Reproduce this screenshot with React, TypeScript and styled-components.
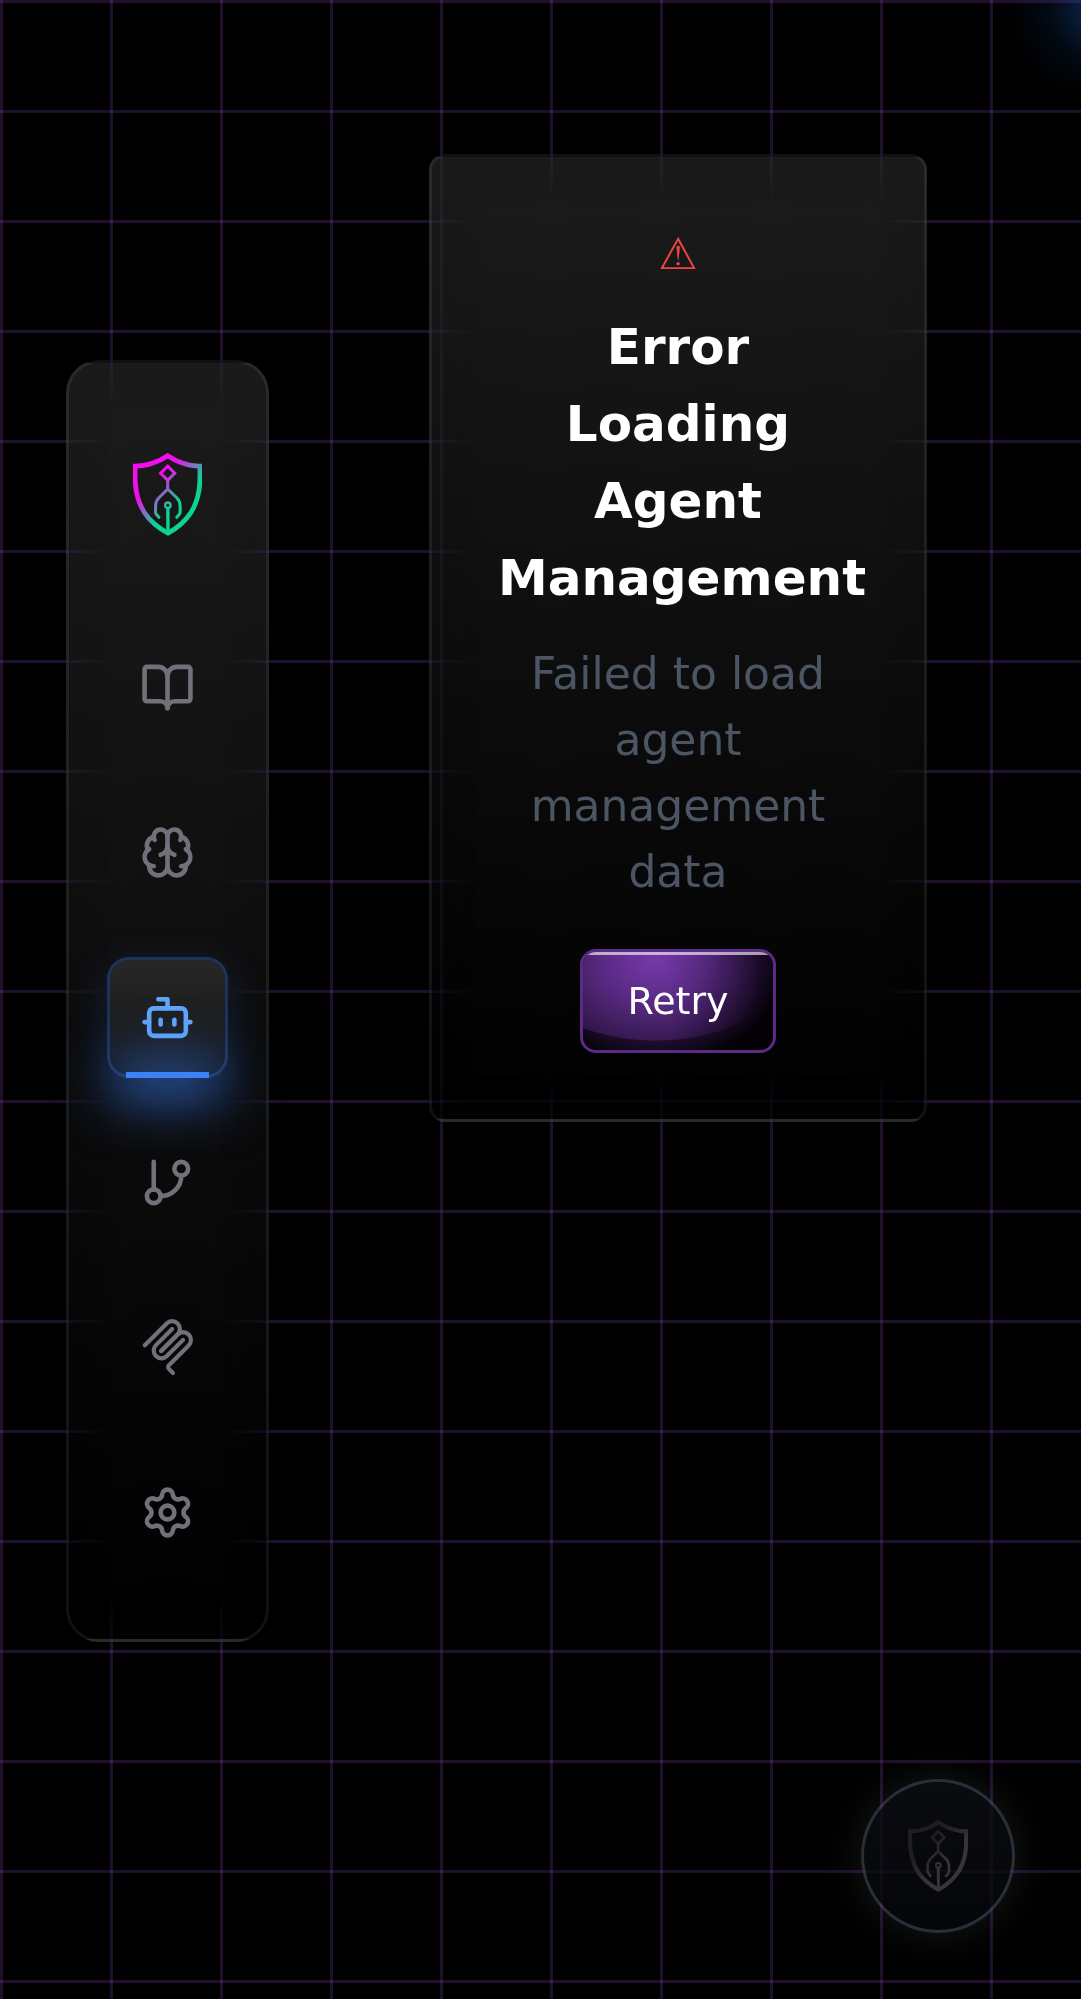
import React from "react";
import styled, { createGlobalStyle, css } from "styled-components";
import { BookOpen, Bot, Brain, GitBranch, Settings } from "lucide-react";

const GlobalStyle = createGlobalStyle`
  *, *::before, *::after { box-sizing: border-box; }
  body {
    margin: 0;
    background: #000;
    font-family: "DejaVu Sans", sans-serif;
  }
`;

const Shell = styled.div`
  display: flex;
  align-items: flex-start;
  gap: 160px;
  min-height: 100vh;
  padding: 0 154px 0 66px;
  background-color: #000;
  background-image:
    radial-gradient(circle 90px at calc(100% + 18px) 10px, rgba(30, 95, 190, 0.42), rgba(30, 95, 190, 0.1) 55%, transparent),
    linear-gradient(rgba(168, 85, 247, 0.19) 3px, transparent 3px),
    linear-gradient(90deg, rgba(168, 85, 247, 0.19) 3px, transparent 3px);
  background-size: 100% 100%, 110px 110px, 110px 110px;
`;

const glass = css`
  position: relative;
  border: 3px solid rgba(255, 255, 255, 0.065);
  background-image: linear-gradient(rgba(43, 43, 43, 0.62), rgba(0, 0, 0, 0.6));

  &::before {
    content: "";
    position: absolute;
    inset: 0;
    border-radius: inherit;
    backdrop-filter: blur(22px);
    mask-image:
      linear-gradient(90deg, transparent, #000 44px, #000 calc(100% - 44px), transparent),
      linear-gradient(transparent, #000 44px, #000 calc(100% - 44px), transparent);
    mask-composite: intersect;
  }

  > * { position: relative; }
`;

const Sidebar = styled.nav`
  ${glass}
  display: flex;
  flex-direction: column;
  align-items: center;
  gap: 44px;
  align-self: center;
  margin-top: 2px;
  padding: 66px 38px;
  border-radius: 33px;
`;

const Brand = styled.a`
  display: flex;
  align-items: center;
  justify-content: center;
  height: 132px;
  margin-bottom: 22px;
`;

const NavButton = styled.button<{ $active?: boolean }>`
  display: flex;
  align-items: center;
  justify-content: center;
  width: 121px;
  height: 121px;
  padding: 0;
  border: 3px solid transparent;
  border-radius: 22px;
  background: none;
  color: #71717a;
  cursor: pointer;

  ${({ $active }) =>
    $active &&
    css`
      color: #60a5fa;
      border-color: rgba(59, 130, 246, 0.32);
      background: linear-gradient(#272727, #131417) padding-box;
      box-shadow: 0 11px 44px rgba(59, 130, 246, 0.18);

      &::after {
        content: "";
        position: absolute;
        left: 16px;
        right: 16px;
        bottom: -3px;
        height: 6px;
        background: #3b82f6;
        box-shadow: 0 6px 55px 14px rgba(59, 130, 246, 0.75);
      }
    `}
`;

const Main = styled.main`
  flex: 1;
  min-width: 0;
  padding-top: 154px;
`;

const ErrorCard = styled.section`
  ${glass}
  display: flex;
  flex-direction: column;
  align-items: stretch;
  padding: 66px;
  border-radius: 16px;
  text-align: center;
`;

const WarningSign = styled.div`
  margin-bottom: 24px;
  font-size: 44px;
  line-height: 62px;
  color: #ef4444;
`;

const Title = styled.h1`
  margin: 0 0 24px;
  font-size: 50px;
  font-weight: 700;
  line-height: 77px;
  color: #fff;
`;

const Message = styled.p`
  margin: 0 0 44px;
  font-size: 44px;
  line-height: 66px;
  color: #4b5563;
`;

const RetryButton = styled.button`
  align-self: center;
  overflow: hidden;
  padding: 22px 44px;
  border: 3px solid #5b2a86;
  border-radius: 16px;
  background: radial-gradient(ellipse 128px 104px at 38% 8%, #6c329b, #4a226c 40%, #1a0b28 82%, #040206) padding-box;
  color: #fff;
  font-family: inherit;
  font-size: 38px;
  line-height: 54px;
  cursor: pointer;

  &::before {
    content: "";
    position: absolute;
    inset: 0;
    background: radial-gradient(ellipse 141px 89px at 38% 0, rgba(168, 85, 247, 0.18) 99%, transparent);
    mask-image: linear-gradient(90deg, #000 45%, transparent 94%);
  }

  &::after {
    content: "";
    position: absolute;
    inset: 0 0 auto;
    height: 3px;
    background: rgba(255, 255, 255, 0.62);
  }
`;

const ButtonText = styled.span`
  position: relative;
`;

const AssistantButton = styled.button`
  position: fixed;
  right: 66px;
  bottom: 66px;
  display: flex;
  align-items: center;
  justify-content: center;
  width: 154px;
  height: 154px;
  padding: 0;
  border: 3px solid rgba(75, 85, 99, 0.55);
  border-radius: 50%;
  background: linear-gradient(rgba(12, 15, 21, 0.75), rgba(6, 9, 14, 0.7)) padding-box;
  box-shadow: 0 0 44px rgba(210, 215, 215, 0.11);
  cursor: pointer;
`;

type ShieldProps = { id: string; width: number; from: string; to: string };

function ShieldLogo({ id, width, from, to }: ShieldProps) {
  return (
    <svg width={width} viewBox="0 0 205 246" fill="none" stroke={`url(#${id})`} aria-hidden="true">
      <defs>
        <linearGradient id={id} gradientUnits="userSpaceOnUse" x1="76" y1="76" x2="138" y2="138">
          <stop offset="0" stopColor={from} />
          <stop offset="1" stopColor={to} />
        </linearGradient>
      </defs>
      <path
        strokeWidth="14"
        d="M103 8C80 24 42 39 7 39C4 92 8 136 34 177C54 207 80 225 104 238C128 225 152 207 172 177C198 136 201 92 198 39C164 39 126 24 103 8Z"
      />
      <path strokeWidth="9" d="M103 39L124 60L103 81L82 60Z" />
      <path
        strokeWidth="9"
        strokeLinecap="round"
        d="M103.1 81L103 107L77 133Q67 143 67 157V175Q67 180 70 183L77 191M103 107L130 133Q140 143 140 157V175Q140 180 137 183L130 191"
      />
      <circle strokeWidth="7" cx="103.500" cy="155" r="8" />
      <path strokeWidth="10" d="M103.500 164L104 238" />
    </svg>
  );
}

function ProtocolIcon() {
  return (
    <svg width="58" height="58" viewBox="0 0 180 180" fill="none" stroke="currentColor" strokeWidth="13" strokeLinecap="round" aria-hidden="true">
      <path d="M18 84.8528L85.8822 16.9706C95.2548 7.59798 110.451 7.59798 119.823 16.9706C129.196 26.3431 129.196 41.5391 119.823 50.9117L68.5581 102.177" />
      <path d="M69.2652 101.47L119.823 50.9117C129.196 41.5391 144.392 41.5391 153.765 50.9117L154.118 51.2652C163.491 60.6378 163.491 75.8338 154.118 85.2063L92.7248 146.6C89.6006 149.724 89.6006 154.789 92.7248 157.913L105.331 170.52" />
      <path d="M102.853 33.9411L52.6482 84.1457C43.2756 93.5183 43.2756 108.714 52.6482 118.087C62.0208 127.459 77.2167 127.459 86.5893 118.087L136.794 67.8822" />
    </svg>
  );
}

const navItems = [
  { label: "Library", icon: <BookOpen size={55} /> },
  { label: "Knowledge", icon: <Brain size={55} /> },
  { label: "Agents", icon: <Bot size={55} />, active: true },
  { label: "Branches", icon: <GitBranch size={55} /> },
  { label: "MCP", icon: <ProtocolIcon /> },
  { label: "Settings", icon: <Settings size={55} /> },
];

export default function App() {
  return (
    <>
      <GlobalStyle />
      <Shell>
        <Sidebar aria-label="Main">
          <Brand href="#" aria-label="Home">
            <ShieldLogo id="brand-gradient" width={69} from="#f30df0" to="#0bd494" />
          </Brand>
          {navItems.map(({ label, icon, active }) => (
            <NavButton key={label} type="button" aria-label={label} aria-current={active ? "page" : undefined} $active={active}>
              {icon}
            </NavButton>
          ))}
        </Sidebar>
        <Main>
          <ErrorCard>
            <WarningSign aria-hidden="true">⚠</WarningSign>
            <Title>Error Loading Agent Management</Title>
            <Message>Failed to load agent management data</Message>
            <RetryButton type="button">
              <ButtonText>Retry</ButtonText>
            </RetryButton>
          </ErrorCard>
        </Main>
      </Shell>
      <AssistantButton type="button" aria-label="Open assistant">
        <ShieldLogo id="assistant-gradient" width={60} from="#1f1f20" to="#363637" />
      </AssistantButton>
    </>
  );
}
